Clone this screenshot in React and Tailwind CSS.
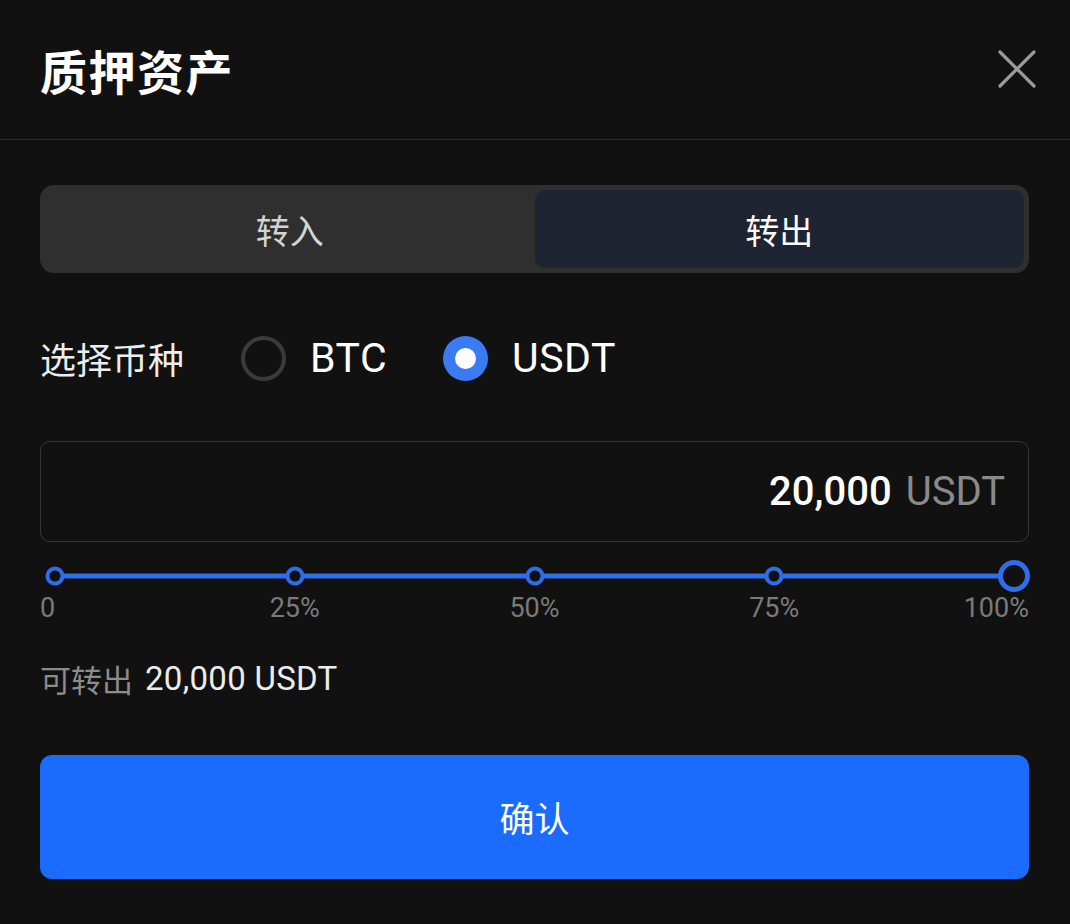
import React, { useState } from 'react';

const latin = { fontFamily: 'Roboto, "Noto Sans CJK SC", sans-serif' };

const marks = [
  { label: '0', dot: 'left-[0%]' },
  { label: '25%', dot: 'left-[25%]' },
  { label: '50%', dot: 'left-[50%]' },
  { label: '75%', dot: 'left-[75%]' },
];

const labels = [
  { label: '25%', pos: 'left-[25%]' },
  { label: '50%', pos: 'left-[50%]' },
  { label: '75%', pos: 'left-[75%]' },
];

const CloseIcon = () => (
  <svg width="40" height="40" viewBox="0 0 40 40" fill="none">
    <path d="M3 3L37 37M37 3L3 37" stroke="#9b9b9b" strokeWidth="3.2" strokeLinecap="round" />
  </svg>
);

const Radio = ({ checked }) =>
  checked ? (
    <span className="flex items-center justify-center w-[45px] h-[45px] rounded-full bg-[#3a7bf4]">
      <span className="w-[21px] h-[21px] rounded-full bg-white" />
    </span>
  ) : (
    <span className="w-[45px] h-[45px] rounded-full border-[4px] border-[#3b3b3b]" />
  );

export default function App() {
  const [tab, setTab] = useState('out');
  const [coin, setCoin] = useState('USDT');

  return (
    <div
      className="w-[1070px] h-[924px] bg-[#111111] text-white overflow-hidden"
      style={{ fontFamily: '"Noto Sans CJK SC", Roboto, sans-serif' }}
    >
      {/* Header */}
      <div className="h-[140px] flex items-center justify-between pl-[40px] pr-[33px] border-b border-[#2a2a2a]">
        <h1 className="text-[47px] font-bold leading-none tracking-[1.5px] text-white">质押资产</h1>
        <button className="p-0 mt-[-2px]">
          <CloseIcon />
        </button>
      </div>

      <div className="pl-[40px] pr-[41px]">
        {/* Tabs */}
        <div className="mt-[45px] h-[88px] p-[5px] rounded-[14px] bg-[#2f2f2f] grid grid-cols-2">
          <button
            onClick={() => setTab('in')}
            className={`rounded-[10px] text-[34px] ${tab === 'in' ? 'bg-[#1e2431] text-white' : 'text-[#d4d4d4]'}`}
          >
            转入
          </button>
          <button
            onClick={() => setTab('out')}
            className={`rounded-[10px] text-[34px] ${tab === 'out' ? 'bg-[#1e2431] text-white' : 'text-[#d4d4d4]'}`}
          >
            转出
          </button>
        </div>

        {/* Coin select */}
        <div className="mt-[62px] h-[46px] flex items-center">
          <span className="text-[36px] text-[#ededed] mr-[57px]">选择币种</span>
          {['BTC', 'USDT'].map((c) => (
            <button key={c} onClick={() => setCoin(c)} className="flex items-center mr-[56px]">
              <Radio checked={coin === c} />
              <span className="ml-[24px] text-[41px] text-white leading-none tracking-[0.5px]" style={latin}>
                {c}
              </span>
            </button>
          ))}
        </div>

        {/* Amount input */}
        <div className="mt-[60px] h-[101px] rounded-[10px] border border-[#363636] flex items-center justify-end pr-[23px]">
          <span className="text-[40px] font-medium text-white" style={latin}>20,000</span>
          <span className="ml-[14px] text-[40px] text-[#8a8a8a]" style={latin}>USDT</span>
        </div>

        {/* Slider */}
        <div className="mt-[18px] mx-[15px] relative h-[32px]">
          <div className="absolute left-0 right-0 top-1/2 -translate-y-1/2 h-[5px] rounded-full bg-[#2f6ee9]" />
          {marks.map((m) => (
            <span
              key={m.label}
              className={`absolute top-1/2 -translate-x-1/2 -translate-y-1/2 w-[19px] h-[19px] rounded-full border-[4px] border-[#2f6ee9] bg-[#111111] ${m.dot}`}
            />
          ))}
          <span className="absolute top-0 right-0 translate-x-1/2 w-[32px] h-[32px] rounded-full border-[5px] border-[#2f6ee9] bg-[#111111]" />
        </div>
        <div className="relative mx-[15px] h-[30px] mt-[1px] text-[27px] leading-[30px] text-[#7a7a7a]" style={latin}>
          <span className="absolute left-[-15px]">0</span>
          {labels.map((m) => (
            <span key={m.label} className={`absolute -translate-x-1/2 ${m.pos}`}>
              {m.label}
            </span>
          ))}
          <span className="absolute right-[-15px]">100%</span>
        </div>

        {/* Available */}
        <div className="mt-[38px] flex items-center h-[36px]">
          <span className="text-[31px] text-[#8c8c8c]">可转出</span>
          <span className="ml-[12px] text-[33px] text-[#ececec] tracking-[0.3px]" style={latin}>20,000 USDT</span>
        </div>

        {/* Confirm */}
        <button className="mt-[58px] w-full h-[124px] rounded-[12px] bg-[#1c6bff] text-[35px] text-white">
          确认
        </button>
      </div>
    </div>
  );
}
